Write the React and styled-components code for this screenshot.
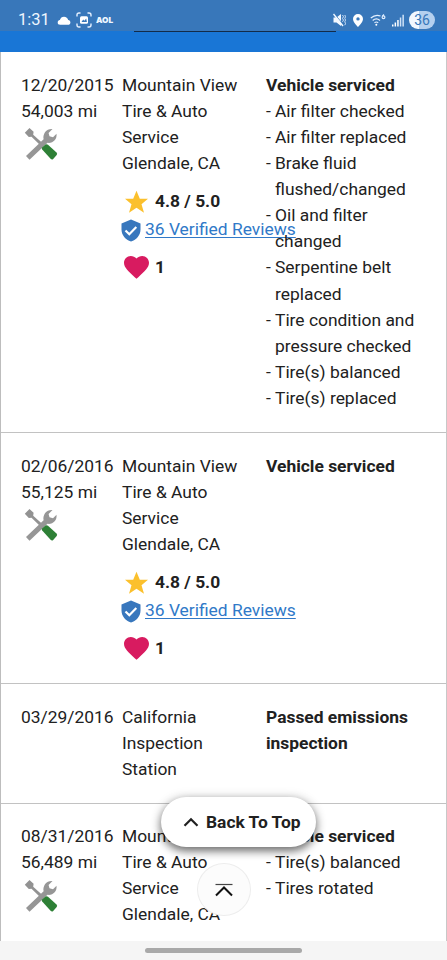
import styled, { createGlobalStyle } from "styled-components";

const GlobalStyle = createGlobalStyle`
  * {
    box-sizing: border-box;
  }
  body {
    margin: 0;
    background: #fff;
    font-family: Roboto, "Liberation Sans", sans-serif;
    color: #212121;
  }
`;

const Screen = styled.div`
  position: relative;
  width: 447px;
  height: 960px;
  overflow: hidden;
  display: flex;
  flex-direction: column;
`;

const StatusBar = styled.div`
  height: 31px;
  flex: none;
  background: #3877ba;
  color: #eef6ff;
  display: flex;
  align-items: center;
  padding: 9px 12px 0 18px;
`;

const Time = styled.span`
  width: 39px;
  font-size: 16.5px;
  line-height: 22px;
`;

const StatusLeft = styled.div`
  display: flex;
  align-items: center;
  gap: 5px;
`;

const Aol = styled.span`
  font-family: Inter, sans-serif;
  font-size: 8.2px;
  font-weight: 900;
  margin-left: -1px;
`;

const StatusRight = styled.div`
  display: flex;
  align-items: center;
  gap: 6px;
  margin-left: auto;
`;

const Battery = styled.div`
  width: 26px;
  height: 18px;
  margin-left: -1px;
  border-radius: 9px;
  background: linear-gradient(90deg, #f2f8ff 38%, #b5d0ef 38%);
  color: #3877ba;
  font-size: 14px;
  line-height: 18px;
  text-align: center;
`;

const AppBar = styled.div`
  height: 21px;
  flex: none;
  background: #1976d6;
`;

const AppBarLine = styled.div`
  width: 202px;
  height: 1px;
  margin-left: 134px;
  background: #122b49;
`;

const History = styled.div`
  flex: 1;
  min-height: 0;
  overflow: hidden;
  border-left: 1px solid #bdbdbd;
  border-right: 1px solid #c8c8c8;
`;

const Record = styled.div`
  display: grid;
  grid-template-columns: 101px 144px 160px;
  height: ${(props) => props.height}px;
  padding: 19.5px 0 0 20px;
  border-bottom: 1px solid #c2c2c2;
  font-size: 17.42px;
  line-height: 26.13px;
`;

const DateCell = styled.div`
  white-space: nowrap;

  svg {
    display: block;
    margin: 3.5px 0 0 3px;
  }
`;

const Shop = styled.div`
  padding-right: 12px;
`;

const Meta = styled.div`
  display: flex;
  align-items: center;
  height: 28px;
  margin-top: ${(props) => props.top}px;
  padding-left: 2px;
  font-weight: 700;

  svg {
    margin-right: 6px;
    flex: none;
  }
`;

const Reviews = styled.div`
  display: flex;
  align-items: center;
  height: 28px;
  white-space: nowrap;

  svg {
    margin: 1px 4px 0 -1px;
    flex: none;
  }
`;

const ReviewLink = styled.a`
  color: #3079c8;
  text-decoration: underline;
  text-decoration-thickness: 1px;
  text-underline-offset: 2px;
`;

const Heading = styled.div`
  font-weight: 700;
`;

const Service = styled.div`
  padding-left: 9px;
  text-indent: -9px;
`;

const Dash = styled.span`
  display: inline-block;
  width: 9px;
  text-indent: 0;
`;

const NavBar = styled.div`
  height: 19px;
  flex: none;
  background: #f5f5f5;
  padding: 7px 0 0 145px;
`;

const NavHandle = styled.div`
  width: 157px;
  height: 5px;
  border-radius: 3px;
  background: #a9a9a9;
`;

const BackToTop = styled.button`
  position: absolute;
  left: 161px;
  top: 797px;
  width: 155px;
  height: 50px;
  border: 0;
  border-radius: 25px;
  background: #fff;
  box-shadow: 0 4px 8px rgba(0, 0, 0, 0.5), 0 1px 12px rgba(0, 0, 0, 0.18);
  color: #212121;
  display: flex;
  align-items: center;
  padding: 0 0 0 22px;
  font-family: inherit;
  font-size: 17.4px;
  font-weight: 700;
  white-space: nowrap;

  svg {
    margin-right: 7px;
    flex: none;
  }
`;

const ScrollTop = styled.div`
  position: absolute;
  left: 197px;
  top: 863px;
  width: 54px;
  height: 53px;
  border: 1px solid #ededed;
  border-radius: 50%;
  background: #fcfcfc;
  display: flex;
  align-items: center;
  justify-content: center;
`;

function CloudIcon() {
  return (
    <svg width="14" height="11" viewBox="0 0 14 11">
      <path d="M3.2 9.800C1.400 9.800.7 8.800.7 7.500c0-1.300.9-2.300 2.200-2.500C3.400 2.900 5 1.700 7 1.700c2.100 0 3.800 1.400 4.200 3.400 1.300.2 2.200 1.100 2.200 2.300 0 1.500-1 2.400-2.500 2.400z" fill="#fff" />
    </svg>
  );
}

function CaptureIcon() {
  return (
    <svg width="16" height="16" viewBox="0 0 16 16">
      <path d="M1 4.500V3q0-2 2-2h1.500M11.500 1H13q2 0 2 2v1.500M15 11.500V13q0 2-2 2h-1.500M4.500 15H3q-2 0-2-2v-1.500" fill="none" stroke="#e6f1ff" strokeWidth="1.400" />
      <rect x="4" y="4.200" width="8" height="7.500" rx="1.500" fill="#fff" />
      <path d="M5.500 10l1.700-2.400 1.200 1.200 1.800-2.300.7 3.500z" fill="#3877ba" />
    </svg>
  );
}

function MuteIcon() {
  return (
    <svg width="13" height="14" viewBox="0 0 13 14">
      <path d="M.5 4.500h3L8 1v12L3.500 9.500h-3z" fill="#f2f8ff" />
      <path d="M1.500 1l9 11" stroke="#3877ba" strokeWidth="1" />
      <path d="M.5 1l9.500 12" stroke="#f2f8ff" strokeWidth="1.400" />
      <path d="M9.500 2l1 1.700-1 1.700 1 1.700-1 1.700M11.800 2l.7 1.700-.7 1.700.7 1.700-.7 1.700.7 1.700-.7 1.700" fill="none" stroke="#e2efff" strokeWidth=".9" />
    </svg>
  );
}

function PinIcon() {
  return (
    <svg width="12" height="15" viewBox="0 0 12 15">
      <path fillRule="evenodd" d="M6 1a5 5 0 0 0-5 5c0 3.300 5 8 5 8s5-4.700 5-8a5 5 0 0 0-5-5zm0 3.200a1.700 1.700 0 1 1 0 3.400 1.700 1.700 0 0 1 0-3.400z" fill="#fff" />
    </svg>
  );
}

function WifiIcon() {
  return (
    <svg width="16" height="14" viewBox="0 0 16 14">
      <g fill="none" stroke="#e2efff" strokeWidth="1.200">
        <path d="M.8 5Q5.500.9 10.500 3M2.700 7.500Q6.300 4.300 10 7.500M4.500 9.800q1.900-1.600 3.700 0" />
        <path d="M14 1.500c-1.300.8-1.900 1.700-1.900 2.800a1.400 1.400 0 1 0 1.400-1.400c-.7 0-1.200.4-1.400 1" />
      </g>
      <circle cx="6.300" cy="11.700" r="1" fill="#fff" />
    </svg>
  );
}

function SignalIcon() {
  return (
    <svg width="12" height="13" viewBox="0 0 12 13">
      <path d="M0 10.500h1.500V12.500H0zM2.600 8.500h1.500v4H2.600zM5.200 6h1.500v6.500H5.200z" fill="#fff" />
      <path d="M7.800 3.500h1.500v9H7.800zM10.400.8h1.500v11.700h-1.500z" fill="#cfe2f7" />
    </svg>
  );
}

// screwdriver and wrench crossed, green handle at the lower right
function ToolsIcon() {
  return (
    <svg width="34" height="34" viewBox="0 0 34 34">
      <path d="M.8 5.800 5.500 1 9.600 4.800 9.200 7.700 17.500 15.200 15.500 17.500 7.500 9.800 4.800 10z" fill="#929292" />
      <path d="M2 29 19.600 12.300C18.500 6.500 22.500 1.500 28.500 2L24.600 6 25.500 9.300 29 10.200 32.500 6.800C33.200 12.500 29 16.500 23.500 15.800L5.500 32.700z" fill="#969696" />
      <path d="M18.200 22.500Q17.300 21.300 18.300 20.300L21.500 17.500Q22.900 16.700 24 17.700L32.500 25.600Q33.700 26.800 32.700 28L29.200 31.900Q28 33 26.800 32z" fill="#2e8036" />
    </svg>
  );
}

function StarIcon() {
  return (
    <svg width="25" height="24" viewBox="0 0 24 24">
      <path d="M12 .8l3.300 8h8.200l-6.500 5.400 2.500 8.600L12 17.700l-7.500 5.100L7 14.200.5 8.800h8.200z" fill="#fbc02d" />
    </svg>
  );
}

function ShieldIcon() {
  return (
    <svg width="20" height="23" viewBox="0 0 20 23">
      <path d="M10 .5l9.500 4v6c0 5.500-4 10.500-9.500 12C4.500 21 .5 16 .5 10.500v-6z" fill="#3877bd" />
      <path d="M4.500 11.500l3.800 3.800 7-7.300" fill="none" stroke="#fff" strokeWidth="2.200" />
    </svg>
  );
}

function HeartIcon() {
  return (
    <svg width="25" height="23" viewBox="0 0 25 23">
      <path d="M12.500 22.800l-1.800-1.600C4.300 15.400 0 11.500 0 6.800 0 3 3 0 6.800 0c2.200 0 4.300 1 5.700 2.600C13.900 1 16 0 18.200 0 22 0 25 3 25 6.800c0 4.700-4.300 8.600-10.700 14.400z" fill="#d81b60" />
    </svg>
  );
}

const shop = "Mountain View Tire & Auto Service";

const records = [
  {
    date: "12/20/2015",
    miles: "54,003 mi",
    shop,
    city: "Glendale, CA",
    rated: true,
    title: "Vehicle serviced",
    height: 381,
    services: [
      "Air filter checked",
      "Air filter replaced",
      "Brake fluid flushed/changed",
      "Oil and filter changed",
      "Serpentine belt replaced",
      "Tire condition and pressure checked",
      "Tire(s) balanced",
      "Tire(s) replaced",
    ],
  },
  {
    date: "02/06/2016",
    miles: "55,125 mi",
    shop,
    city: "Glendale, CA",
    rated: true,
    title: "Vehicle serviced",
    height: 251,
    services: [],
  },
  {
    date: "03/29/2016",
    shop: "California Inspection Station",
    title: "Passed emissions inspection",
    height: 119.5,
    services: [],
  },
  {
    date: "08/31/2016",
    miles: "56,489 mi",
    shop,
    city: "Glendale, CA",
    title: "Vehicle serviced",
    height: 251,
    services: ["Tire(s) balanced", "Tires rotated"],
  },
];

function HistoryRecord({ record }) {
  return (
    <Record height={record.height}>
      <DateCell>
        <div>{record.date}</div>
        {record.miles && <div>{record.miles}</div>}
        {record.miles && <ToolsIcon />}
      </DateCell>
      <Shop>
        <div>{record.shop}</div>
        <div>{record.city}</div>
        {record.rated && (
          <>
            <Meta top={11.5}><StarIcon />4.8 / 5.0</Meta>
            <Reviews><ShieldIcon /><ReviewLink>36 Verified Reviews</ReviewLink></Reviews>
            <Meta top={10}><HeartIcon />1</Meta>
          </>
        )}
      </Shop>
      <div>
        <Heading>{record.title}</Heading>
        {record.services.map((service) => (
          <Service key={service}><Dash>-</Dash>{service}</Service>
        ))}
      </div>
    </Record>
  );
}

function App() {
  return (
    <Screen>
      <GlobalStyle />
      <StatusBar>
        <Time>1:31</Time>
        <StatusLeft>
          <CloudIcon />
          <CaptureIcon />
          <Aol>AOL</Aol>
        </StatusLeft>
        <StatusRight>
          <MuteIcon />
          <PinIcon />
          <WifiIcon />
          <SignalIcon />
          <Battery>36</Battery>
        </StatusRight>
      </StatusBar>
      <AppBar><AppBarLine /></AppBar>
      <History>
        {records.map((record) => <HistoryRecord key={record.date} record={record} />)}
      </History>
      <NavBar><NavHandle /></NavBar>
      <BackToTop>
        <svg width="16" height="10" viewBox="0 0 16 10">
          <path d="M1.500 8.800L8 2.200l6.500 6.600" fill="none" stroke="#212121" strokeWidth="2.200" />
        </svg>
        Back To Top
      </BackToTop>
      <ScrollTop>
        <svg width="18" height="14" viewBox="0 0 18 14">
          <path d="M.5 1.500h17" stroke="#444" strokeWidth="1.200" />
          <path d="M1 12.500L9 4.500l8 8" fill="none" stroke="#111" strokeWidth="2" />
        </svg>
      </ScrollTop>
    </Screen>
  );
}

export default App;
